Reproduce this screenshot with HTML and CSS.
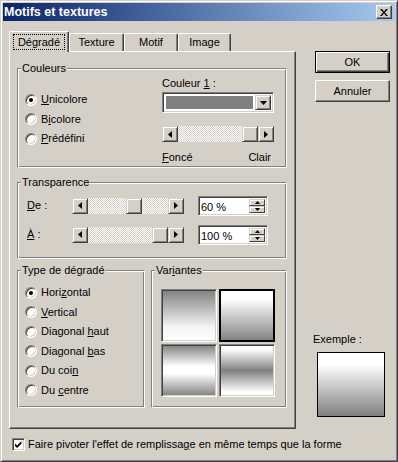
FILE: index.html
```html
<!DOCTYPE html>
<html lang="fr">
<head>
  <meta charset="UTF-8">
  <title>Motifs et textures</title>
  <link rel="stylesheet" href="styles.css">
</head>
<body>

<div class="window">
  <div class="titlebar">
    <span class="title">Motifs et textures</span>
    <span class="close">
      <svg width="8" height="7" viewBox="0 0 8 7"><path d="M0 0H2L4 2.4L6 0H8L5 3.5L8 7H6L4 4.6L2 7H0L3 3.5Z"/></svg>
    </span>
  </div>

  <div class="main">
    <div class="left">
      <div class="tabs">
        <div class="tab active tab-degrade"><span class="focus">Dégradé</span></div>
        <div class="tab tab-texture">Texture</div>
        <div class="tab tab-motif">Motif</div>
        <div class="tab tab-image">Image</div>
      </div>

      <div class="panel">
        <!-- Couleurs -->
        <div class="group couleurs">
          <div class="legend">Couleurs</div>
          <div class="couleurs-body">
            <div class="radios">
              <div class="radio-row"><span class="radio on"></span><span><u>U</u>nicolore</span></div>
              <div class="radio-row"><span class="radio"></span><span>B<u>i</u>colore</span></div>
              <div class="radio-row"><span class="radio"></span><span><u>P</u>rédéfini</span></div>
            </div>
            <div class="color-col">
              <div class="lbl">Couleur <u>1</u> :</div>
              <div class="combo">
                <div class="swatch"></div>
                <div class="drop">
                  <svg width="7" height="4" viewBox="0 0 7 4"><path d="M0 0H7L3.5 4Z"/></svg>
                </div>
              </div>
              <div class="hscroll">
                <div class="arrow"><svg width="4" height="7" viewBox="0 0 4 7"><path d="M4 0V7L0 3.5Z"/></svg></div>
                <div class="track"><div class="thumb" style="margin-left: 64px"></div></div>
                <div class="arrow"><svg width="4" height="7" viewBox="0 0 4 7"><path d="M0 0V7L4 3.5Z"/></svg></div>
              </div>
              <div class="ends"><span><u>F</u>oncé</span><span>Clair</span></div>
            </div>
          </div>
        </div>

        <!-- Transparence -->
        <div class="group transp">
          <div class="legend">Transparence</div>
          <div class="trow first">
            <span class="tlbl"><u>D</u>e :</span>
            <div class="hscroll">
              <div class="arrow"><svg width="4" height="7" viewBox="0 0 4 7"><path d="M4 0V7L0 3.5Z"/></svg></div>
              <div class="track"><div class="thumb" style="margin-left: 38px"></div></div>
              <div class="arrow"><svg width="4" height="7" viewBox="0 0 4 7"><path d="M0 0V7L4 3.5Z"/></svg></div>
            </div>
            <div class="spin">
              <span class="val">60 %</span>
              <div class="spin-btns">
                <div class="sbtn"><svg width="5" height="3" viewBox="0 0 5 3"><path d="M2.5 0L5 3H0Z"/></svg></div>
                <div class="sbtn"><svg width="5" height="3" viewBox="0 0 5 3"><path d="M0 0H5L2.5 3Z"/></svg></div>
              </div>
            </div>
          </div>
          <div class="trow">
            <span class="tlbl"><u>À</u> :</span>
            <div class="hscroll">
              <div class="arrow"><svg width="4" height="7" viewBox="0 0 4 7"><path d="M4 0V7L0 3.5Z"/></svg></div>
              <div class="track"><div class="thumb" style="margin-left: 64px"></div></div>
              <div class="arrow"><svg width="4" height="7" viewBox="0 0 4 7"><path d="M0 0V7L4 3.5Z"/></svg></div>
            </div>
            <div class="spin">
              <span class="val">100 %</span>
              <div class="spin-btns">
                <div class="sbtn"><svg width="5" height="3" viewBox="0 0 5 3"><path d="M2.5 0L5 3H0Z"/></svg></div>
                <div class="sbtn"><svg width="5" height="3" viewBox="0 0 5 3"><path d="M0 0H5L2.5 3Z"/></svg></div>
              </div>
            </div>
          </div>
        </div>

        <div class="bottom">
          <!-- Type de dégradé -->
          <div class="group type">
            <div class="legend">Type de dégradé</div>
            <div class="radios">
              <div class="radio-row"><span class="radio on"></span><span>Hori<u>z</u>ontal</span></div>
              <div class="radio-row"><span class="radio"></span><span><u>V</u>ertical</span></div>
              <div class="radio-row"><span class="radio"></span><span>Diagonal <u>h</u>aut</span></div>
              <div class="radio-row"><span class="radio"></span><span>Diagonal <u>b</u>as</span></div>
              <div class="radio-row"><span class="radio"></span><span>Du coi<u>n</u></span></div>
              <div class="radio-row"><span class="radio"></span><span>Du <u>c</u>entre</span></div>
            </div>
          </div>

          <!-- Variantes -->
          <div class="group variantes">
            <div class="legend">Var<u>i</u>antes</div>
            <div class="tiles">
              <div class="tile v1"></div>
              <div class="tile v2 sel"></div>
              <div class="tile v3"></div>
              <div class="tile v4"></div>
            </div>
          </div>
        </div>
      </div>
    </div>

    <div class="side">
      <div class="btn default">OK</div>
      <div class="btn">Annuler</div>
      <div class="example-label">Exemple :</div>
      <div class="preview"></div>
    </div>
  </div>

  <div class="check-row">
    <span class="checkbox">
      <svg width="7" height="7" viewBox="0 0 7 7"><path d="M0 2.5L2 4.5L6.5 0V2.5L2 7L0 5Z"/></svg>
    </span>
    <span>Faire pivoter l'effet de remplissa<u>g</u>e en même temps que la forme</span>
  </div>
</div>

</body>
</html>
```

FILE: styles.css
```css
* { margin: 0; padding: 0; box-sizing: border-box; }
body { background: #d4d0c8; color: #000; font-family: "Liberation Sans", Arial, sans-serif; font-size: 11px; line-height: 13px; }
u { text-underline-offset: 1px; }

/* window frame */
.window { width: 398px; height: 462px; padding: 2px; background: #d4d0c8; border: 1px solid; border-color: #d4d0c8 #404040 #404040 #d4d0c8; box-shadow: inset 1px 1px #fff, inset -1px -1px #808080; }
.titlebar { height: 18px; display: flex; align-items: center; justify-content: space-between; padding: 0 3px 0 1px; background: linear-gradient(to right, #0a246a, #a6caf0); color: #fff; }
.title { font-weight: bold; font-size: 12.5px; }
.close { width: 16px; height: 14px; display: flex; align-items: center; justify-content: center; background: #d4d0c8; border: 1px solid; border-color: #fff #404040 #404040 #fff; box-shadow: inset -1px -1px #808080; }

.main { display: flex; padding: 10px 0 0 6px; }
.left { width: 287px; }

/* tabs */
.tabs { display: flex; align-items: flex-end; height: 20px; }
.tab { height: 18px; display: flex; align-items: center; justify-content: center; border: 1px solid; border-bottom: 0; border-color: #fff #404040 #404040 #fff; border-radius: 2px 2px 0 0; box-shadow: inset -1px 0 #808080; background: #d4d0c8; }
.tab.active { height: 21px; margin-bottom: -1px; position: relative; z-index: 1; padding-bottom: 1px; }
.tab-degrade { width: 60px; }
.tab-texture { width: 55px; }
.tab-motif { width: 54px; }
.tab-image { width: 53px; }
.focus { border: 1px dotted #000; padding: 1px 4px 0; line-height: 13px; }

.panel { height: 378px; padding: 16px 0 0 7px; border: 1px solid; border-color: #fff #404040 #404040 #fff; box-shadow: inset -1px -1px #808080; }

/* group boxes */
.group { width: 270px; border: 1px solid; border-color: #808080 #fff #fff #808080; box-shadow: inset 1px 1px #fff, inset -1px -1px #808080; }
.legend { width: fit-content; margin: -7px 0 0 3px; padding: 0 1px; background: #d4d0c8; }

.couleurs { height: 100px; }
.couleurs-body { display: flex; justify-content: space-between; }
.couleurs .radios { padding-top: 15px; }
.radio-row { display: flex; align-items: center; height: 19.5px; padding-left: 7px; }
.radio { flex: none; width: 12px; height: 12px; margin-right: 4px; display: flex; align-items: center; justify-content: center; border-radius: 50%; background: #fff; border: 1px solid; border-color: #808080 #fff #fff #808080; box-shadow: inset 1px 1px #404040, inset -1px -1px #d4d0c8; }
.radio.on::after { content: ""; width: 4px; height: 4px; border-radius: 50%; background: #000; }

.color-col { width: 112px; margin: 2px 12px 0 0; }
.combo { display: flex; height: 21px; margin-top: 2px; padding: 2px; background: #fff; border: 1px solid; border-color: #808080 #fff #fff #808080; box-shadow: inset 1px 1px #404040, inset -1px -1px #d4d0c8; }
.swatch { flex: 1; margin: 1px 2px 1px 1px; background: #808080; }
.drop { width: 16px; display: flex; align-items: center; justify-content: center; background: #d4d0c8; border: 1px solid; border-color: #d4d0c8 #404040 #404040 #d4d0c8; box-shadow: inset 1px 1px #fff, inset -1px -1px #808080; }
.color-col .hscroll { margin-top: 13px; }
.ends { display: flex; justify-content: space-between; margin-top: 9px; padding-right: 3px; }

/* scrollbars */
.hscroll { display: flex; width: 112px; height: 16px; flex: none; }
.arrow, .thumb { width: 16px; height: 16px; flex: none; display: flex; align-items: center; justify-content: center; background: #d4d0c8; border: 1px solid; border-color: #d4d0c8 #404040 #404040 #d4d0c8; box-shadow: inset 1px 1px #fff, inset -1px -1px #808080; }
.track { flex: 1; display: flex; background: repeating-conic-gradient(#fff 0 25%, #d4d0c8 0 50%) 0 0 / 2px 2px; }

/* transparence */
.transp { height: 77px; margin-top: 14px; }
.trow { display: flex; align-items: center; height: 19px; margin-top: 10px; padding-left: 9px; }
.trow.first { margin-top: 7px; }
.tlbl { width: 45px; }
.spin { display: flex; width: 70px; height: 20px; margin-left: 14px; padding: 2px; background: #fff; border: 1px solid; border-color: #808080 #fff #fff #808080; box-shadow: inset 1px 1px #404040, inset -1px -1px #d4d0c8; }
.val { flex: 1; line-height: 16px; }
.spin-btns { width: 16px; display: flex; flex-direction: column; }
.sbtn { height: 8px; display: flex; align-items: center; justify-content: center; background: #d4d0c8; border: 1px solid; border-color: #d4d0c8 #404040 #404040 #d4d0c8; box-shadow: inset 1px 1px #fff; }

/* bottom groups */
.bottom { display: flex; gap: 6px; margin-top: 11px; }
.bottom .group { height: 138px; }
.type { width: 128px; }
.type .radios { padding-top: 6px; }
.variantes { width: 136px; }
.tiles { display: grid; grid-template-columns: 56px 56px; grid-template-rows: 53px 53px; gap: 2px; margin: 12px 0 0 9px; }
.tile { border: 1px solid; border-color: #808080 #fff #fff #808080; box-shadow: inset 1px 1px #404040, inset -1px -1px #d4d0c8; }
.tile.sel { border-color: #000; box-shadow: inset 0 0 0 1px #000; }
.v1 { background: linear-gradient(#808080, #f4f4f4 72%, #fff); }
.v2 { background: linear-gradient(#fff 18%, #808080); }
.v3 { background: linear-gradient(#808080, #fff 42%, #fff 56%, #808080); }
.v4 { background: linear-gradient(#fff 8%, #808080 50%, #fff 92%); }

/* right column */
.side { width: 75px; margin-left: 19px; padding-top: 20px; }
.btn { width: 75px; height: 22px; margin-bottom: 7px; display: flex; align-items: center; justify-content: center; border: 1px solid; border-color: #fff #404040 #404040 #fff; box-shadow: inset -1px -1px #808080; }
.btn.default { border-color: #000; box-shadow: inset 1px 1px #fff, inset -1px -1px #404040, inset -2px -2px #808080; }
.example-label { margin: 231px 0 0 -2px; }
.preview { width: 68px; height: 65px; margin: 6px 0 0 2px; border: 1px solid #000; background: linear-gradient(#fff 18%, #808080); }

/* checkbox */
.check-row { display: flex; align-items: center; height: 15px; margin: 8px 0 0 9px; }
.checkbox { width: 13px; height: 13px; margin-right: 3px; display: flex; align-items: center; justify-content: center; background: #fff; border: 1px solid; border-color: #808080 #fff #fff #808080; box-shadow: inset 1px 1px #404040, inset -1px -1px #d4d0c8; }
```
